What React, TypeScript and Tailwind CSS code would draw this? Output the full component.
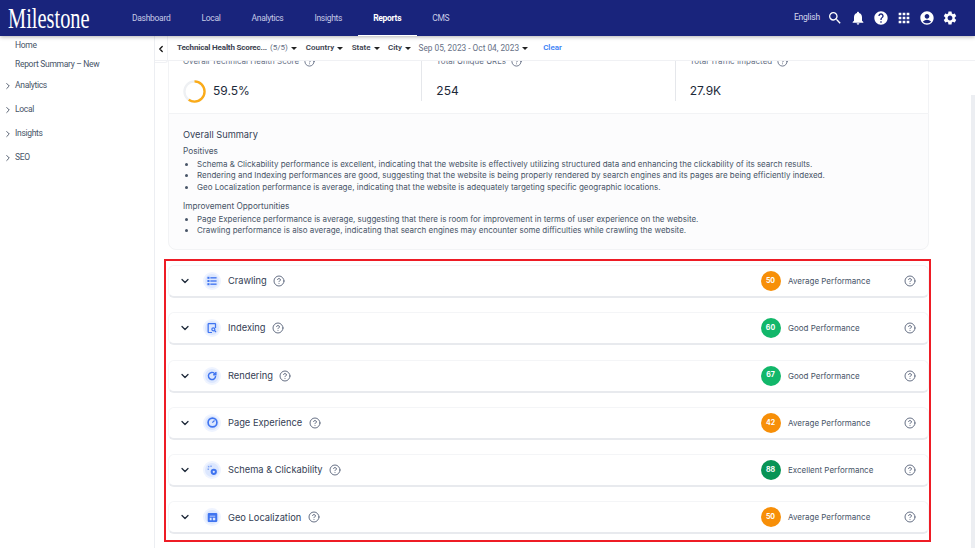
import React from 'react';
import { ChevronDown, ChevronLeft, ChevronRight, CircleHelp } from 'lucide-react';
import { MdAccountCircle, MdApps, MdHelp, MdNotifications, MdSearch, MdSettings } from 'react-icons/md';

const navItems = ['Dashboard', 'Local', 'Analytics', 'Insights', 'Reports', 'CMS'];

const rows = [
  { name: 'Crawling', score: 50, label: 'Average Performance', color: 'bg-[#f78f08]', icon: 'list' },
  { name: 'Indexing', score: 60, label: 'Good Performance', color: 'bg-[#12b76a]', icon: 'index' },
  { name: 'Rendering', score: 67, label: 'Good Performance', color: 'bg-[#12b76a]', icon: 'refresh' },
  { name: 'Page Experience', score: 42, label: 'Average Performance', color: 'bg-[#f78f08]', icon: 'gauge' },
  { name: 'Schema & Clickability', score: 88, label: 'Excellent Performance', color: 'bg-[#079455]', icon: 'click' },
  { name: 'Geo Localization', score: 50, label: 'Average Performance', color: 'bg-[#f78f08]', icon: 'browser' },
];

const RowIcon = ({ type }: { type: string }) => {
  if (type === 'list') {
    return (
      <svg viewBox="0 0 12 12" className="w-[10px] h-[10px] text-[#3f74f0]" fill="currentColor">
        <rect x="0.5" y="1" width="2.5" height="2.4" />
        <rect x="0.5" y="4.8" width="2.5" height="2.4" />
        <rect x="0.5" y="8.6" width="2.5" height="2.4" />
        <rect x="4" y="1.4" width="7.5" height="1.6" />
        <rect x="4" y="5.2" width="7.5" height="1.6" />
        <rect x="4" y="9" width="7.5" height="1.6" />
      </svg>
    );
  }
  if (type === 'index') {
    return (
      <svg viewBox="0 0 12 12" className="w-[10px] h-[10px] text-[#3f74f0]" fill="none" stroke="currentColor" strokeWidth="1.5">
        <path d="M10.2 6V1.6a1 1 0 0 0-1-1H2.4a1 1 0 0 0-1 1v8.8a1 1 0 0 0 1 1H6" />
        <circle cx="7.6" cy="7.6" r="1.8" />
        <path d="M9 9l1.8 1.8" />
      </svg>
    );
  }
  if (type === 'refresh') {
    return (
      <svg viewBox="0 0 12 12" className="w-[10px] h-[10px] text-[#3f74f0]" fill="none" stroke="currentColor" strokeWidth="1.7">
        <path d="M10.3 6a4.3 4.3 0 1 1-1.3-3.1L10.5 4.3" />
        <path d="M10.6 1.2v3.2H7.4" />
      </svg>
    );
  }
  if (type === 'gauge') {
    return (
      <svg viewBox="0 0 12 12" className="w-[11px] h-[11px] text-[#3f74f0]" fill="none" stroke="currentColor" strokeWidth="1.8">
        <circle cx="6" cy="6" r="4.8" />
        <path d="M8.2 3.8L5.8 6.2" strokeWidth="1.3" />
      </svg>
    );
  }
  if (type === 'click') {
    return (
      <svg viewBox="0 0 12 12" className="w-[11px] h-[11px] text-[#3f74f0]" fill="currentColor">
        <rect x="1" y="1" width="1.6" height="1.6" opacity="0.6" />
        <rect x="3.6" y="0.6" width="1.6" height="1.6" opacity="0.6" />
        <rect x="0.6" y="3.8" width="1.6" height="1.6" opacity="0.6" />
        <circle cx="7.4" cy="7.4" r="3.4" />
        <circle cx="7.4" cy="7.4" r="1.2" fill="#dce7fe" />
      </svg>
    );
  }
  return (
    <svg viewBox="0 0 12 12" className="w-[11px] h-[11px] text-[#3f74f0]" fill="currentColor">
      <path d="M2 1h8a1.2 1.2 0 0 1 1.2 1.2v7.6A1.2 1.2 0 0 1 10 11H2a1.2 1.2 0 0 1-1.2-1.2V2.2A1.2 1.2 0 0 1 2 1zm1 3v1h6V4zm0 2.4V9h2V6.4zm3.4 0V9H9V6.4z" fillRule="evenodd" />
    </svg>
  );
};

const FilterCaret = () => <span className="ml-[3px] w-0 h-0 border-x-[3px] border-x-transparent border-t-[3px] border-t-[#222]" />;

const Metric = ({ title, value, ring, last }: { title: string; value: string; ring?: boolean; last?: boolean }) => (
  <div className={`flex-1 h-[46px] pl-[14px] ${last ? '' : 'border-r border-[#e5e7eb]'}`}>
    <div className="flex items-center gap-[5px] h-3 text-[8px] text-[#667085]">
      {title}
      <CircleHelp className="w-[11px] h-[11px]" />
    </div>
    <div className="mt-[14px] flex items-center gap-[7px] text-[12px] leading-[20px] text-[#1d2939]">
      {ring && (
        <svg viewBox="0 0 24 24" className="w-[23px] h-[23px] -my-[2px]">
          <circle cx="12" cy="12" r="10.5" fill="none" stroke="#eef0f3" strokeWidth="2.4" />
          <circle cx="12" cy="12" r="10.5" fill="none" stroke="#fbab18" strokeWidth="2.4" strokeDasharray="39.2 66" transform="rotate(-90 12 12)" />
        </svg>
      )}
      {value}
    </div>
  </div>
);

const App = () => {
  return (
    <div className="h-[548px] w-[975px] overflow-hidden bg-white flex flex-col font-['Inter',sans-serif]">
      <header className="h-9 shrink-0 bg-[#19247c] flex items-center shadow-[0_1px_4px_rgba(0,0,0,0.3)] z-20 font-['Roboto',sans-serif]">
        <div className="w-[116.5px] pl-2 shrink-0">
          <span className="block origin-left scale-x-[0.68] font-['Liberation_Serif',serif] text-[30px] leading-8 text-white">Milestone</span>
        </div>
        <nav className="flex h-full">
          {navItems.map((item) => (
            <a
              key={item}
              className={`flex items-center px-[15.5px] pt-[1px] text-[8.5px] tracking-[-0.3px] ${
                item === 'Reports' ? 'font-bold text-white border-b-[1.5px] border-white' : 'text-[#c7cbe6]'
              }`}
            >
              {item}
            </a>
          ))}
        </nav>
        <div className="ml-auto pr-[17px] flex items-center text-white">
          <span className="text-[8.5px] tracking-[-0.2px] text-[#d5d8ee] mr-[7px] pb-[2px]">English</span>
          <div className="flex items-center gap-[7px] pb-[1px]">
            <MdSearch className="w-4 h-4" />
            <MdNotifications className="w-4 h-4" />
            <MdHelp className="w-4 h-4" />
            <MdApps className="w-4 h-4" />
            <MdAccountCircle className="w-4 h-4" />
            <MdSettings className="w-4 h-4" />
          </div>
        </div>
      </header>

      <div className="flex flex-1 min-h-0">
        <aside className="w-[155px] shrink-0 border-r border-[#eceef2] text-[8.5px] tracking-[-0.3px] text-[#475467] font-['Roboto',sans-serif]">
          <div className="pl-[15px] pt-[4px] leading-[11px]">Home</div>
          <div className="pl-[15px] pt-[8px] leading-[11px]">Report Summary – New</div>
          {['Analytics', 'Local', 'Insights', 'SEO'].map((item, i) => (
            <div key={item} className={`flex items-center pl-[3px] leading-[11px] ${i === 0 ? 'mt-[10px]' : 'mt-[13px]'}`}>
              <ChevronRight className="w-[10px] h-[10px] mr-[2px] text-[#344054]" strokeWidth={2} />
              {item}
            </div>
          ))}
        </aside>

        <main className="flex-1 min-w-0 flex flex-col relative">
          <div className="h-[25px] shrink-0 flex items-center border-b border-[#f0f1f4] font-['Roboto',sans-serif] text-[8px] text-[#3d4350]">
            <div className="w-[13px] h-[27px] flex items-center justify-center border-r border-b border-[#f0f1f4] rounded-br-[3px] self-start">
              <ChevronLeft className="w-[10px] h-[10px] text-[#111]" strokeWidth={3} />
            </div>
            <div className="pl-[9px] flex items-center">
              <span className="font-bold tracking-[-0.16px]">Technical Health Scorec...</span>
              <span className="ml-[3px] text-[#667085]">(5/5)</span>
              <FilterCaret />
              <span className="ml-[9px] font-semibold">Country</span>
              <FilterCaret />
              <span className="ml-[8.5px] font-semibold">State</span>
              <FilterCaret />
              <span className="ml-[8.5px] font-semibold">City</span>
              <FilterCaret />
              <span className="ml-[7.5px] text-[#667085] text-[8.3px]">Sep 05, 2023 - Oct 04, 2023</span>
              <FilterCaret />
              <span className="ml-[15px] font-semibold text-[#3b82f6]">Clear</span>
            </div>
          </div>

          <div className="flex-1 min-h-0 overflow-hidden pl-[13px] pr-[46px] relative">
            <div className="flex border-x border-[#f2f3f5] -mt-[6px] h-[58px]">
              <Metric title="Overall Technical Health Score" value="59.5%" ring />
              <Metric title="Total Unique URLs" value="254" />
              <Metric title="Total Traffic Impacted" value="27.9K" last />
            </div>
            <div className="bg-[#fcfcfd] border border-[#f2f3f5] rounded-b-lg h-[137px] px-[14px] pt-[14px] text-[8px] leading-[11.5px] text-[#475467]">
              <h3 className="text-[9.25px] leading-[14px] text-[#344054]">Overall Summary</h3>
              <p className="mt-[2px] text-[8.25px] leading-[14px]">Positives</p>
              <ul className="mt-[0.5px] list-disc pl-[14px]">
                <li>Schema &amp; Clickability performance is excellent, indicating that the website is effectively utilizing structured data and enhancing the clickability of its search results.</li>
                <li>Rendering and Indexing performances are good, suggesting that the website is being properly rendered by search engines and its pages are being efficiently indexed.</li>
                <li>Geo Localization performance is average, indicating that the website is adequately targeting specific geographic locations.</li>
              </ul>
              <p className="mt-[5.5px] text-[8.25px] leading-[14px]">Improvement Opportunities</p>
              <ul className="mt-[1px] list-disc pl-[14px]">
                <li>Page Experience performance is average, suggesting that there is room for improvement in terms of user experience on the website.</li>
                <li>Crawling performance is also average, indicating that search engines may encounter some difficulties while crawling the website.</li>
              </ul>
            </div>

            <div className="mt-[15px] flex flex-col gap-[14.3px]">
              {rows.map((row) => (
                <div key={row.name} className="h-[33px] flex items-center rounded-[6px] border border-[#f4f5f7] border-b-2 border-b-[#e8eaee] bg-white pl-[10px] pr-[12.5px]">
                  <ChevronDown className="w-[12px] h-[12px] text-[#1d2939]" strokeWidth={2.5} />
                  <div className="ml-[12px] w-[18px] h-[18px] rounded-full bg-[#eff4ff] flex items-center justify-center">
                    <div className="w-[14px] h-[14px] rounded-full bg-[#dce7fe] flex items-center justify-center">
                      <RowIcon type={row.icon} />
                    </div>
                  </div>
                  <span className="ml-[7px] text-[9.3px] text-[#344054]">{row.name}</span>
                  <CircleHelp className="ml-[6.5px] w-[12px] h-[12px] text-[#667085]" />
                  <div className={`ml-auto w-5 h-5 rounded-full ${row.color} flex items-center justify-center text-[7px] font-bold text-white`}>{row.score}</div>
                  <span className="ml-[7.5px] w-[115.5px] text-[8px] text-[#475467]">{row.label}</span>
                  <CircleHelp className="w-[12px] h-[12px] text-[#667085]" />
                </div>
              ))}
            </div>

            {/* selection highlight drawn around the rows */}
            <div className="absolute left-[9px] right-[44px] top-[198px] bottom-[6px] border-2 border-[#ee1c25] pointer-events-none" />
            <div className="absolute right-0 top-[34px] w-[4px] h-full bg-[#eceef2]" />
          </div>
        </main>
      </div>
    </div>
  );
};

export default App;
